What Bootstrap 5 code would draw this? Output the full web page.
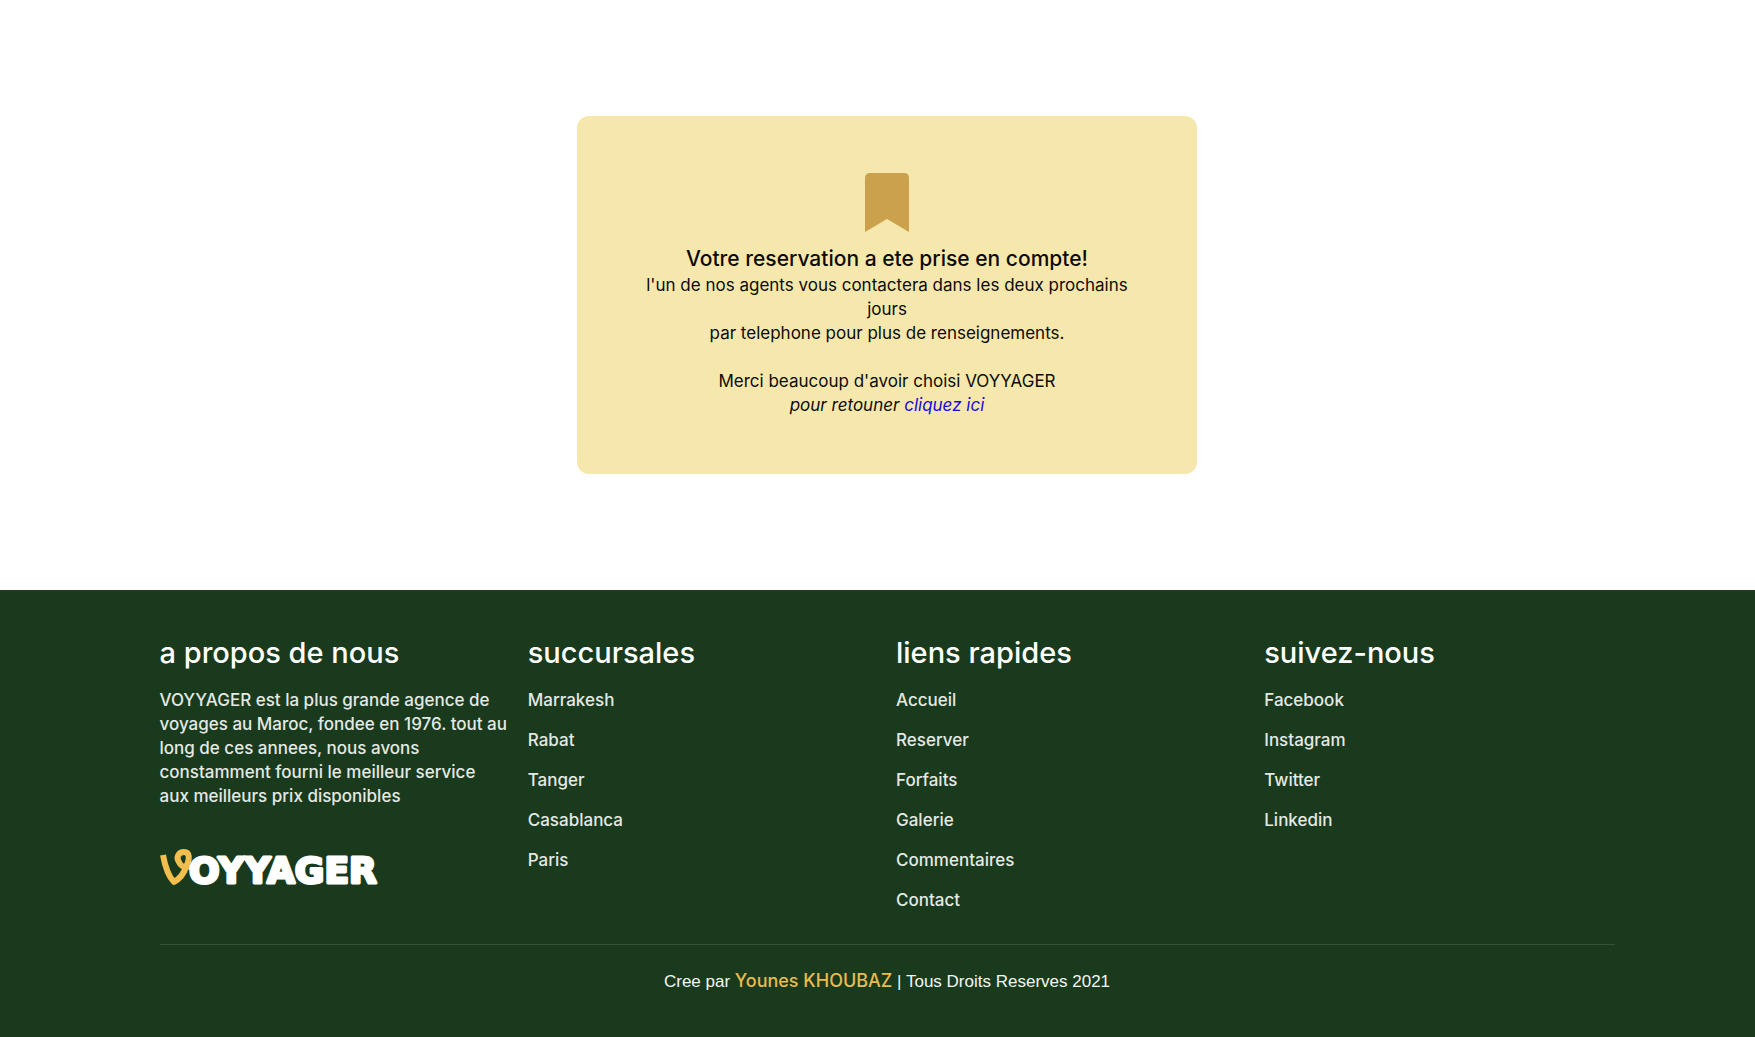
<!DOCTYPE html>
<html lang="fr">
<head>
<meta charset="utf-8">
<meta name="viewport" content="width=device-width, initial-scale=1">
<title>VOYYAGER - Reservation</title>
<link href="https://cdn.jsdelivr.net/npm/bootstrap@5.3.0/dist/css/bootstrap.min.css" rel="stylesheet">
<style>
  body { font-family: Inter, "Open Sans", sans-serif; font-size: 17px; line-height: 24px; font-weight: 500; color: #0c0b08; }
  .confirm-area { padding: 116px 16px 116px 35px; }
  .confirm-box { max-width: 620px; padding: 57px 56px; background: #f6e8ad; border-radius: 12px; font-weight: 400; }
  .confirm-box svg { width: 44px; height: 59px; margin-bottom: 13px; }
  .confirm-title { font-size: 21px; line-height: 28px; font-weight: 500; }
  .back-link { color: #1408e0; }
  .site-footer { background: #193a1d; color: #e4e9e4; padding: 45px 16px 40px 35px; }
  .footer-wrap { max-width: 1455px; }
  .footer-cols { --bs-gutter-x: 18px; }
  .footer-cols h2 { font-size: 29px; line-height: 36px; font-weight: 500; color: #fff; margin-bottom: 17px; }
  .footer-cols ul { gap: 16px; }
  .footer-cols a { color: inherit; }
  .brand-logo { height: 54px; width: 240px; margin-top: 34px; }
  .brand-logo text { font-family: "DejaVu Sans", sans-serif; font-weight: 700; font-size: 36px; fill: #fff; stroke: #fff; stroke-width: 3; stroke-linejoin: round; }
  .credit-line { border-top: 1px solid #345139; margin-top: 32px; padding-top: 24px; font-family: "Liberation Sans", Arial, sans-serif; font-weight: 400; color: #f4f6f4; }
  .credit-line a { color: #e9bb50; font-family: Inter, sans-serif; font-size: 18px; font-weight: 500; }
</style>
<script src="https://cdn.jsdelivr.net/npm/bootstrap@5.3.0/dist/js/bootstrap.bundle.min.js"></script>
</head>
<body class="d-flex flex-column min-vh-100">
<main class="confirm-area">
  <section class="confirm-box mx-auto text-center">
    <svg class="d-block mx-auto" viewBox="0 0 44 59" aria-hidden="true"><path fill="#cba24b" d="M0 5Q0 0 5 0H39Q44 0 44 5V59L22 46L0 59Z"/></svg>
    <h1 class="confirm-title mb-0">Votre reservation a ete prise en compte!</h1>
    <p class="mb-0">l'un de nos agents vous contactera dans les deux prochains jours<br>par telephone pour plus de renseignements.</p>
    <p class="mb-0 mt-4">Merci beaucoup d'avoir choisi VOYYAGER<br><em>pour retouner <a class="back-link text-decoration-none" href="#">cliquez ici</a></em></p>
  </section>
</main>
<footer class="site-footer flex-grow-1">
  <div class="footer-wrap mx-auto">
    <div class="row footer-cols">
      <div class="col-12 col-sm-6 col-lg-3">
        <h2>a propos de nous</h2>
        <p class="mb-0">VOYYAGER est la plus grande agence de voyages au Maroc, fondee en 1976. tout au long de ces annees, nous avons constamment fourni le meilleur service<br>aux meilleurs prix disponibles</p>
        <svg class="brand-logo d-block" viewBox="0 -6 240 54" role="img" aria-label="VOYYAGER">
          <path fill="none" stroke="#f2be4d" stroke-width="6" stroke-linejoin="round" d="M3 7C5 18 9 29 14 34C21 30 24 25 26 19C30 11 30 4 24 4C18 4 16 10 19 14C21 19 26 20 31 18"/>
          <text x="29" y="35">OYYAGER</text>
        </svg>
      </div>
      <nav class="col-12 col-sm-6 col-lg-3" aria-label="succursales">
        <h2>succursales</h2>
        <ul class="list-unstyled d-flex flex-column mb-0">
          <li><a class="text-decoration-none" href="#">Marrakesh</a></li>
          <li><a class="text-decoration-none" href="#">Rabat</a></li>
          <li><a class="text-decoration-none" href="#">Tanger</a></li>
          <li><a class="text-decoration-none" href="#">Casablanca</a></li>
          <li><a class="text-decoration-none" href="#">Paris</a></li>
        </ul>
      </nav>
      <nav class="col-12 col-sm-6 col-lg-3" aria-label="liens rapides">
        <h2>liens rapides</h2>
        <ul class="list-unstyled d-flex flex-column mb-0">
          <li><a class="text-decoration-none" href="#">Accueil</a></li>
          <li><a class="text-decoration-none" href="#">Reserver</a></li>
          <li><a class="text-decoration-none" href="#">Forfaits</a></li>
          <li><a class="text-decoration-none" href="#">Galerie</a></li>
          <li><a class="text-decoration-none" href="#">Commentaires</a></li>
          <li><a class="text-decoration-none" href="#">Contact</a></li>
        </ul>
      </nav>
      <nav class="col-12 col-sm-6 col-lg-3" aria-label="suivez-nous">
        <h2>suivez-nous</h2>
        <ul class="list-unstyled d-flex flex-column mb-0">
          <li><a class="text-decoration-none" href="#">Facebook</a></li>
          <li><a class="text-decoration-none" href="#">Instagram</a></li>
          <li><a class="text-decoration-none" href="#">Twitter</a></li>
          <li><a class="text-decoration-none" href="#">Linkedin</a></li>
        </ul>
      </nav>
    </div>
    <div class="credit-line text-center">Cree par <a class="text-decoration-none" href="#">Younes KHOUBAZ</a> | Tous Droits Reserves 2021</div>
  </div>
</footer>
</body>
</html>
